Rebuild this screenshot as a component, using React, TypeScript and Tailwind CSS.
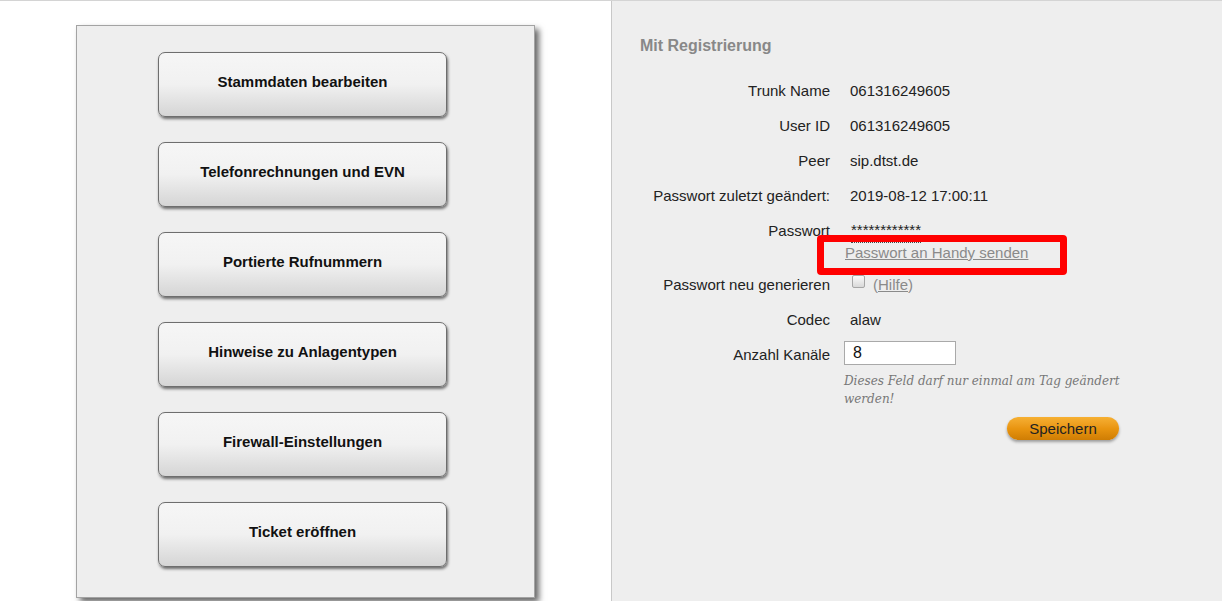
import React from 'react';

const menu = [
  'Stammdaten bearbeiten',
  'Telefonrechnungen und EVN',
  'Portierte Rufnummern',
  'Hinweise zu Anlagentypen',
  'Firewall-Einstellungen',
  'Ticket eröffnen',
];

const infoRows = [
  ['Trunk Name', '061316249605'],
  ['User ID', '061316249605'],
  ['Peer', 'sip.dtst.de'],
  ['Passwort zuletzt geändert:', '2019-08-12 17:00:11'],
];

const Label = ({ children }: { children: React.ReactNode }) => (
  <div className="w-[190px] shrink-0 text-right leading-[35px]">{children}</div>
);

export default function App() {
  return (
    <div className="relative flex h-[601px] w-full overflow-hidden border-t border-[#d4d4d4] bg-white font-['Liberation_Sans',Arial,sans-serif] text-[15px] text-[#222]">
      {/* linke Spalte mit Menü */}
      <div className="w-[611px] shrink-0 pl-[76px] pt-[24px]">
        <div className="h-[573px] w-[459px] border border-[#a3a3a3] bg-[#eeeeee] pl-[81px] pt-[26px] shadow-[4px_4px_6px_rgba(0,0,0,0.6)]">
          <div className="flex flex-col gap-[25px]">
            {menu.map((item) => (
              <button
                key={item}
                className="flex h-[65px] w-[289px] items-center justify-center rounded-[7px] border border-[#6e6e6e] bg-gradient-to-b from-[#f6f6f6] via-[#f1f1f1] to-[#d5d5d5] pb-[5px] text-[15px] font-bold text-[#111] shadow-[1px_2px_3px_rgba(0,0,0,0.55)]"
              >
                {item}
              </button>
            ))}
          </div>
        </div>
      </div>

      {/* rechte Spalte mit Trunk-Daten */}
      <div className="flex-1 border-l border-[#c8c8c8] bg-[#eeeeee] pl-[28px] pt-[35px]">
        <h2 className="text-[16px] font-bold leading-[20px] text-[#888]">Mit Registrierung</h2>

        <div className="mt-[17px]">
          {infoRows.map(([label, value]) => (
            <div key={label} className="flex h-[35px]">
              <Label>{label}</Label>
              <div className="pl-[20px] leading-[35px]">{value}</div>
            </div>
          ))}

          <div className="flex h-[54px]">
            <Label>Passwort</Label>
            <div className="pl-[15px] pt-[8px]">
              <span className="ml-[6px] block w-fit border-b border-dotted border-[#444] pb-[3px] leading-[18px]">
                ************
              </span>
              <a href="#" className="block leading-[20px] text-[#8a8a8a] underline">
                Passwort an Handy senden
              </a>
            </div>
          </div>

          <div className="flex h-[35px]">
            <Label>Passwort neu generieren</Label>
            <div className="flex items-center pl-[22px]">
              <input
                type="checkbox"
                className="mt-[-7px] h-[13px] w-[13px] appearance-none rounded-[2px] border border-[#a6a6a6] bg-gradient-to-b from-[#fbfbfb] to-[#d9d9d9]"
              />
              <a href="#" className="ml-[8px] mt-[2px] text-[#8a8a8a]">
                (<span className="underline">Hilfe</span>)
              </a>
            </div>
          </div>

          <div className="flex h-[35px]">
            <Label>Codec</Label>
            <div className="pl-[20px] leading-[35px]">alaw</div>
          </div>

          <div className="flex h-[35px]">
            <Label>Anzahl Kanäle</Label>
            <div className="pl-[14px] pt-[4px]">
              <input
                type="text"
                defaultValue="8"
                className="h-[24px] w-[112px] border border-[#a9a9a9] bg-white px-[8px] text-[16px] leading-[22px] text-[#111] outline-none"
              />
            </div>
          </div>

          <div className="flex">
            <div className="w-[190px] shrink-0" />
            <div className="w-[290px] pl-[14px]">
              <p className="whitespace-nowrap font-['DejaVu_Serif',Georgia,serif] text-[12px] italic leading-[18px] text-[#777]">
                Dieses Feld darf nur einmal am Tag geändert
                <br />
                werden!
              </p>
              <div className="mt-[9px] flex justify-end pr-[1px]">
                <button className="h-[23px] w-[112px] rounded-full bg-gradient-to-b from-[#f6b032] via-[#e99510] to-[#cf7d04] text-[15px] leading-[23px] text-[#222] shadow-[0_2px_3px_rgba(0,0,0,0.35)]">
                  Speichern
                </button>
              </div>
            </div>
          </div>
        </div>
      </div>

      {/* rote Markierung */}
      <div className="absolute left-[817px] top-[234px] h-[40px] w-[250px] rounded-[4px] border-[7px] border-[#ff0000]" />
    </div>
  );
}
